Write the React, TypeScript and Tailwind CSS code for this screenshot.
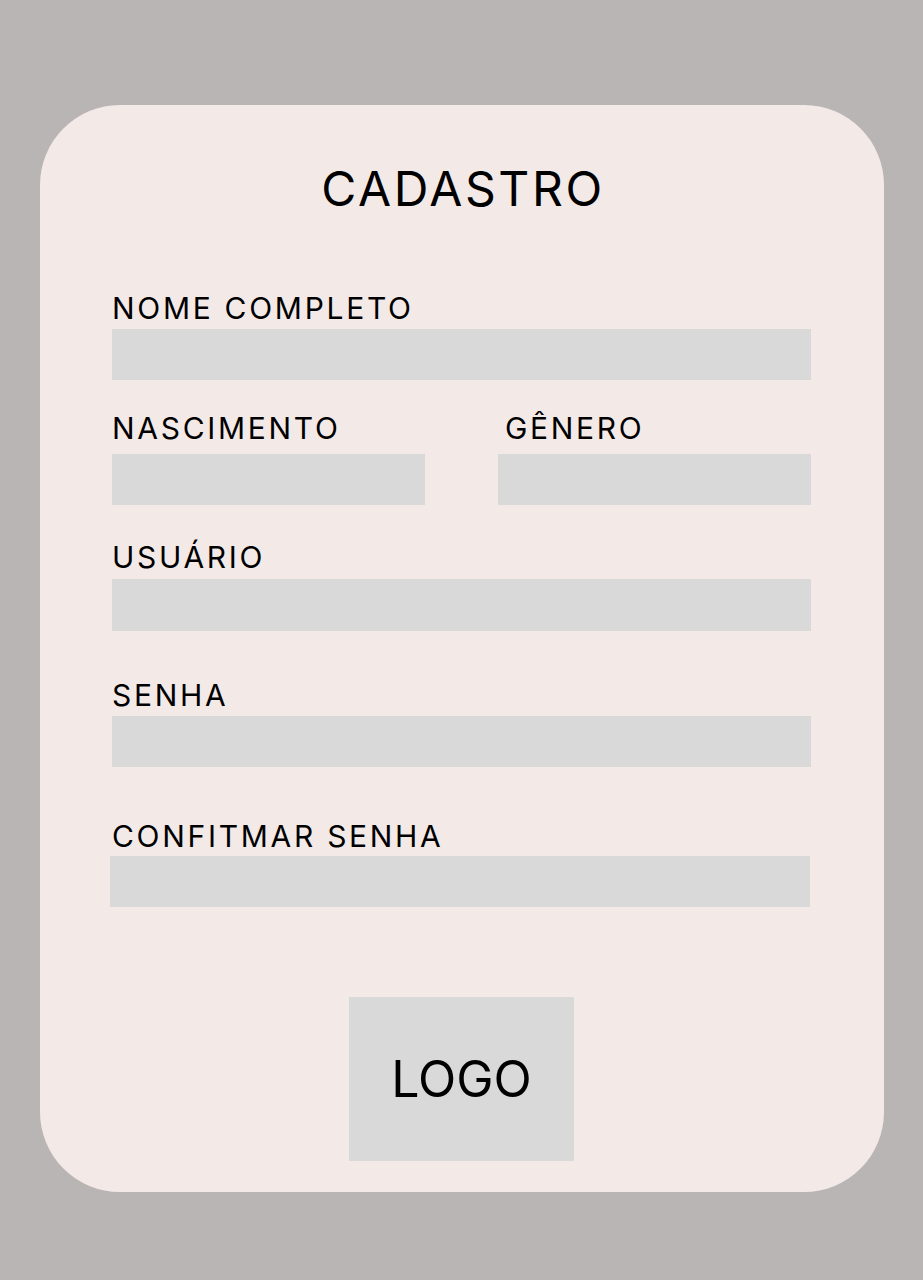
import React from 'react';

const font = { fontFamily: 'Inter, "Noto Sans", sans-serif' };

const Field = ({ className = '' }: { className?: string }) => (
  <div className={`h-[51px] bg-[#d9d9d9] ${className}`} />
);

const Label = ({ children, className = '' }: { children: React.ReactNode; className?: string }) => (
  <div className={`text-[30px] leading-[30px] tracking-[2.7px] text-black ${className}`}>{children}</div>
);

export default function App() {
  return (
    <div className="min-h-[1280px] w-full bg-[#bab5b5] pt-[105px] pl-[40px]" style={font}>
      <div className="w-[844px] rounded-[80px] bg-[#f3eae8] pt-[60px] pb-[31px] pl-[72px]">
        {/* Title */}
        <h1 className="w-[699px] pl-[3px] text-center text-[48px] leading-[48px] tracking-[2.6px] text-black">CADASTRO</h1>

        {/* Nome completo */}
        <Label className="mt-[80px]">NOME COMPLETO</Label>
        <Field className="mt-[6px] w-[699px]" />

        {/* Nascimento / Gênero */}
        <div className="mt-[33px] flex w-[699px] gap-[73px]">
          <div className="flex-1">
            <Label>NASCIMENTO</Label>
            <Field className="mt-[11px]" />
          </div>
          <div className="flex-1">
            <Label className="pl-[7px]">GÊNERO</Label>
            <Field className="mt-[11px]" />
          </div>
        </div>

        {/* Usuário */}
        <Label className="mt-[37px]">USUÁRIO</Label>
        <Field className="mt-[7px] h-[52px] w-[699px]" />

        {/* Senha */}
        <Label className="mt-[49px]">SENHA</Label>
        <Field className="mt-[6px] w-[699px]" />

        {/* Confirmar senha */}
        <Label className="mt-[54px]">CONFITMAR SENHA</Label>
        <Field className="-ml-[2px] mt-[5px] w-[700px]" />

        {/* Logo */}
        <div className="mt-[90px] flex w-[699px] justify-center">
          <div className="flex h-[164px] w-[225px] items-center justify-center bg-[#d9d9d9] text-[50px] leading-none text-black">
            LOGO
          </div>
        </div>
      </div>
    </div>
  );
}
